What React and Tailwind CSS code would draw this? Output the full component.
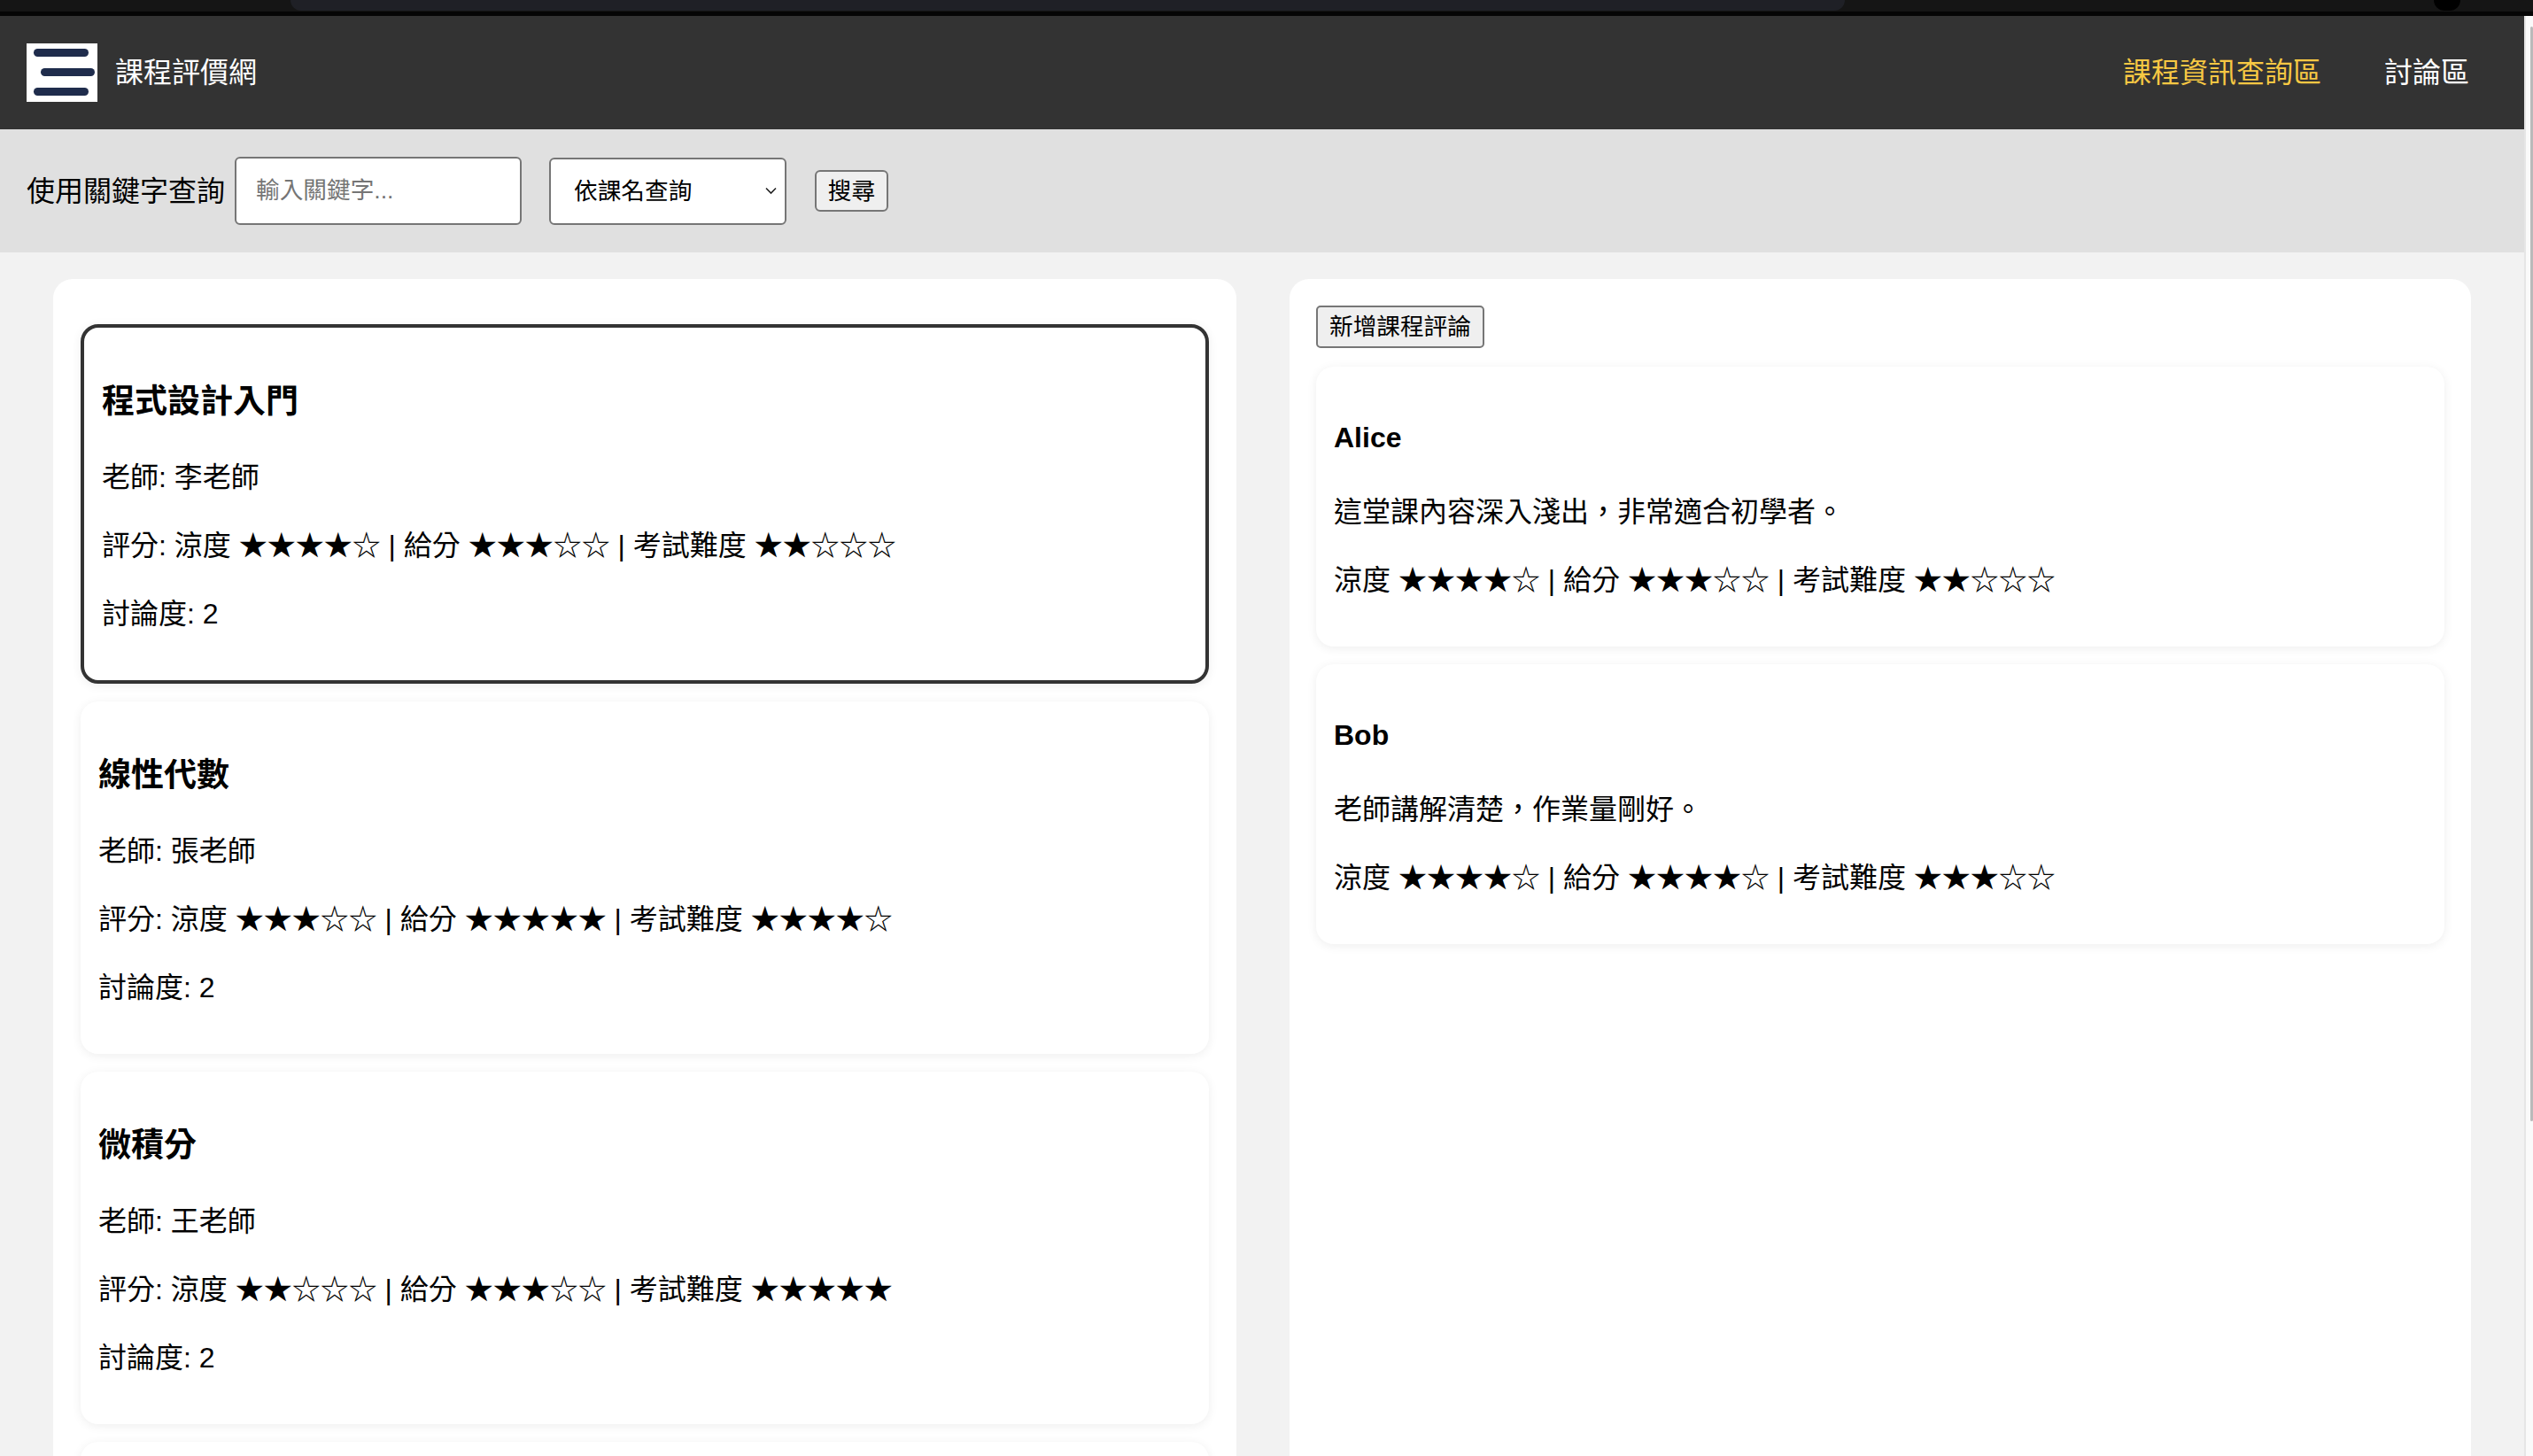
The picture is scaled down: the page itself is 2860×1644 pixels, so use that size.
import React from "react";

const courses = [
  {
    name: "程式設計入門",
    teacher: "李老師",
    cool: 4,
    grade: 3,
    exam: 2,
    talk: 2,
    selected: true,
  },
  { name: "線性代數", teacher: "張老師", cool: 3, grade: 5, exam: 4, talk: 2 },
  { name: "微積分", teacher: "王老師", cool: 2, grade: 3, exam: 5, talk: 2 },
];

const reviews = [
  {
    user: "Alice",
    text: "這堂課內容深入淺出，非常適合初學者。",
    cool: 4,
    grade: 3,
    exam: 2,
  },
  { user: "Bob", text: "老師講解清楚，作業量剛好。", cool: 4, grade: 4, exam: 3 },
];

const stars = (n) => "★".repeat(n) + "☆".repeat(5 - n);

const ratingLine = (r) =>
  `涼度 ${stars(r.cool)} | 給分 ${stars(r.grade)} | 考試難度 ${stars(r.exam)}`;

const CourseCard = ({ course }) => (
  <div
    className={`bg-white rounded-[20px] p-[20px] shadow-[0_2px_12px_rgba(0,0,0,0.07)] ${
      course.selected ? "border-[4px] border-[#333333]" : ""
    }`}
  >
    <h3 className="text-[37px] font-bold leading-[53px] mt-[37px] mb-[37px]">
      {course.name}
    </h3>
    <p className="leading-[45px] mb-[32px]">老師: {course.teacher}</p>
    <p className="leading-[45px] mb-[32px] whitespace-pre">評分: {ratingLine(course)}</p>
    <p className="leading-[45px] mb-[32px]">討論度: {course.talk}</p>
  </div>
);

const ReviewCard = ({ review }) => (
  <div className="bg-white rounded-[20px] p-[20px] shadow-[0_2px_12px_rgba(0,0,0,0.07)]">
    <h4 className="font-bold leading-[45px] mt-[38px] mb-[39px]">{review.user}</h4>
    <p className="leading-[45px] mb-[32px]">{review.text}</p>
    <p className="leading-[45px] mb-[32px] whitespace-pre">{ratingLine(review)}</p>
  </div>
);

export default function App() {
  return (
    <div
      className="h-[1644px] w-[2860px] overflow-hidden flex flex-col text-[32px] text-black bg-[#f2f2f2]"
      style={{ fontFamily: '"Liberation Sans", "Noto Sans CJK TC", sans-serif' }}
    >
      {/* browser chrome strip */}
      <div className="h-[18px] shrink-0 bg-[#151515] border-b-[5px] border-[#050505] flex">
        <div className="ml-[328px] w-[1755px] h-[12px] bg-[#1f2026] rounded-b-[14px]" />
        <div className="ml-[665px] w-[30px] h-[12px] bg-black rounded-b-full" />
      </div>

      <div className="flex flex-1 min-h-0">
        <div className="flex-1 flex flex-col min-w-0">
          {/* navbar */}
          <nav className="h-[128px] shrink-0 bg-[#333333] flex items-center pl-[30px] pr-[62px]">
            <div className="w-[80px] h-[66px] bg-white relative">
              <span className="absolute left-[8px] top-[6px] w-[62px] h-[9px] rounded-full bg-[#1f2c4c]" />
              <span className="absolute left-[16px] top-[28px] w-[61px] h-[9px] rounded-full bg-[#1f2c4c]" />
              <span className="absolute left-[8px] top-[50px] w-[62px] h-[9px] rounded-full bg-[#1f2c4c]" />
            </div>
            <span className="ml-[20px] text-white text-[32px]">課程評價網</span>
            <div className="ml-auto flex items-center gap-[71px]">
              <a className="text-[#f7c843] cursor-pointer">課程資訊查詢區</a>
              <a className="text-white cursor-pointer">討論區</a>
            </div>
          </nav>

          {/* search */}
          <div className="h-[139px] shrink-0 bg-[#e0e0e0] flex items-center pl-[30px]">
            <span>使用關鍵字查詢</span>
            <input
              className="ml-[11px] w-[324px] h-[77px] bg-white border-[2px] border-[#767676] rounded-[6px] px-[22px] text-[26.67px] placeholder:text-[#757575] outline-none"
              placeholder="輸入關鍵字..."
            />
            <div className="ml-[31px] relative w-[268px] h-[76px]">
              <select className="appearance-none w-full h-full bg-white border-[2px] border-[#767676] rounded-[6px] pl-[26px] text-[26.67px] text-black outline-none">
                <option>依課名查詢</option>
                <option>依老師查詢</option>
              </select>
              <svg
                className="absolute right-[11px] top-[33px] pointer-events-none"
                width="13"
                height="9"
                viewBox="0 0 13 9"
                fill="none"
              >
                <path d="M1 1.5 L6.5 7 L12 1.5" stroke="#222" strokeWidth="1.6" />
              </svg>
            </div>
            <button className="ml-[32px] w-[83px] h-[47px] bg-[#efefef] border-[2px] border-[#767676] rounded-[6px] text-[26.67px]">
              搜尋
            </button>
          </div>

          {/* main */}
          <div className="flex-1 min-h-0 flex gap-[60px] px-[60px] pt-[30px]">
            <div className="flex-1 bg-white rounded-t-[22px] px-[31px] pt-[51px] flex flex-col gap-[20px]">
              {courses.map((c) => (
                <CourseCard key={c.name} course={c} />
              ))}
              {/* next card, only its top edge is in view */}
              <div className="h-[398px] shrink-0 bg-white rounded-[20px] shadow-[0_2px_12px_rgba(0,0,0,0.07)]" />
            </div>
            <div className="flex-1 bg-white rounded-t-[22px] p-[30px] flex flex-col">
              <button className="self-start h-[48px] px-[13px] bg-[#efefef] border-[2px] border-[#767676] rounded-[5px] text-[26.67px] mb-[21px]">
                新增課程評論
              </button>
              <div className="flex flex-col gap-[20px]">
                {reviews.map((r) => (
                  <ReviewCard key={r.user} review={r} />
                ))}
              </div>
            </div>
          </div>
        </div>

        {/* scrollbar */}
        <div className="w-[10px] shrink-0 bg-[#fafafa] border-l-[2px] border-[#e6e6e6] flex justify-end pt-[12px]">
          <div className="w-[3px] h-[1236px] bg-[#bababa] rounded-full" />
        </div>
      </div>
    </div>
  );
}
